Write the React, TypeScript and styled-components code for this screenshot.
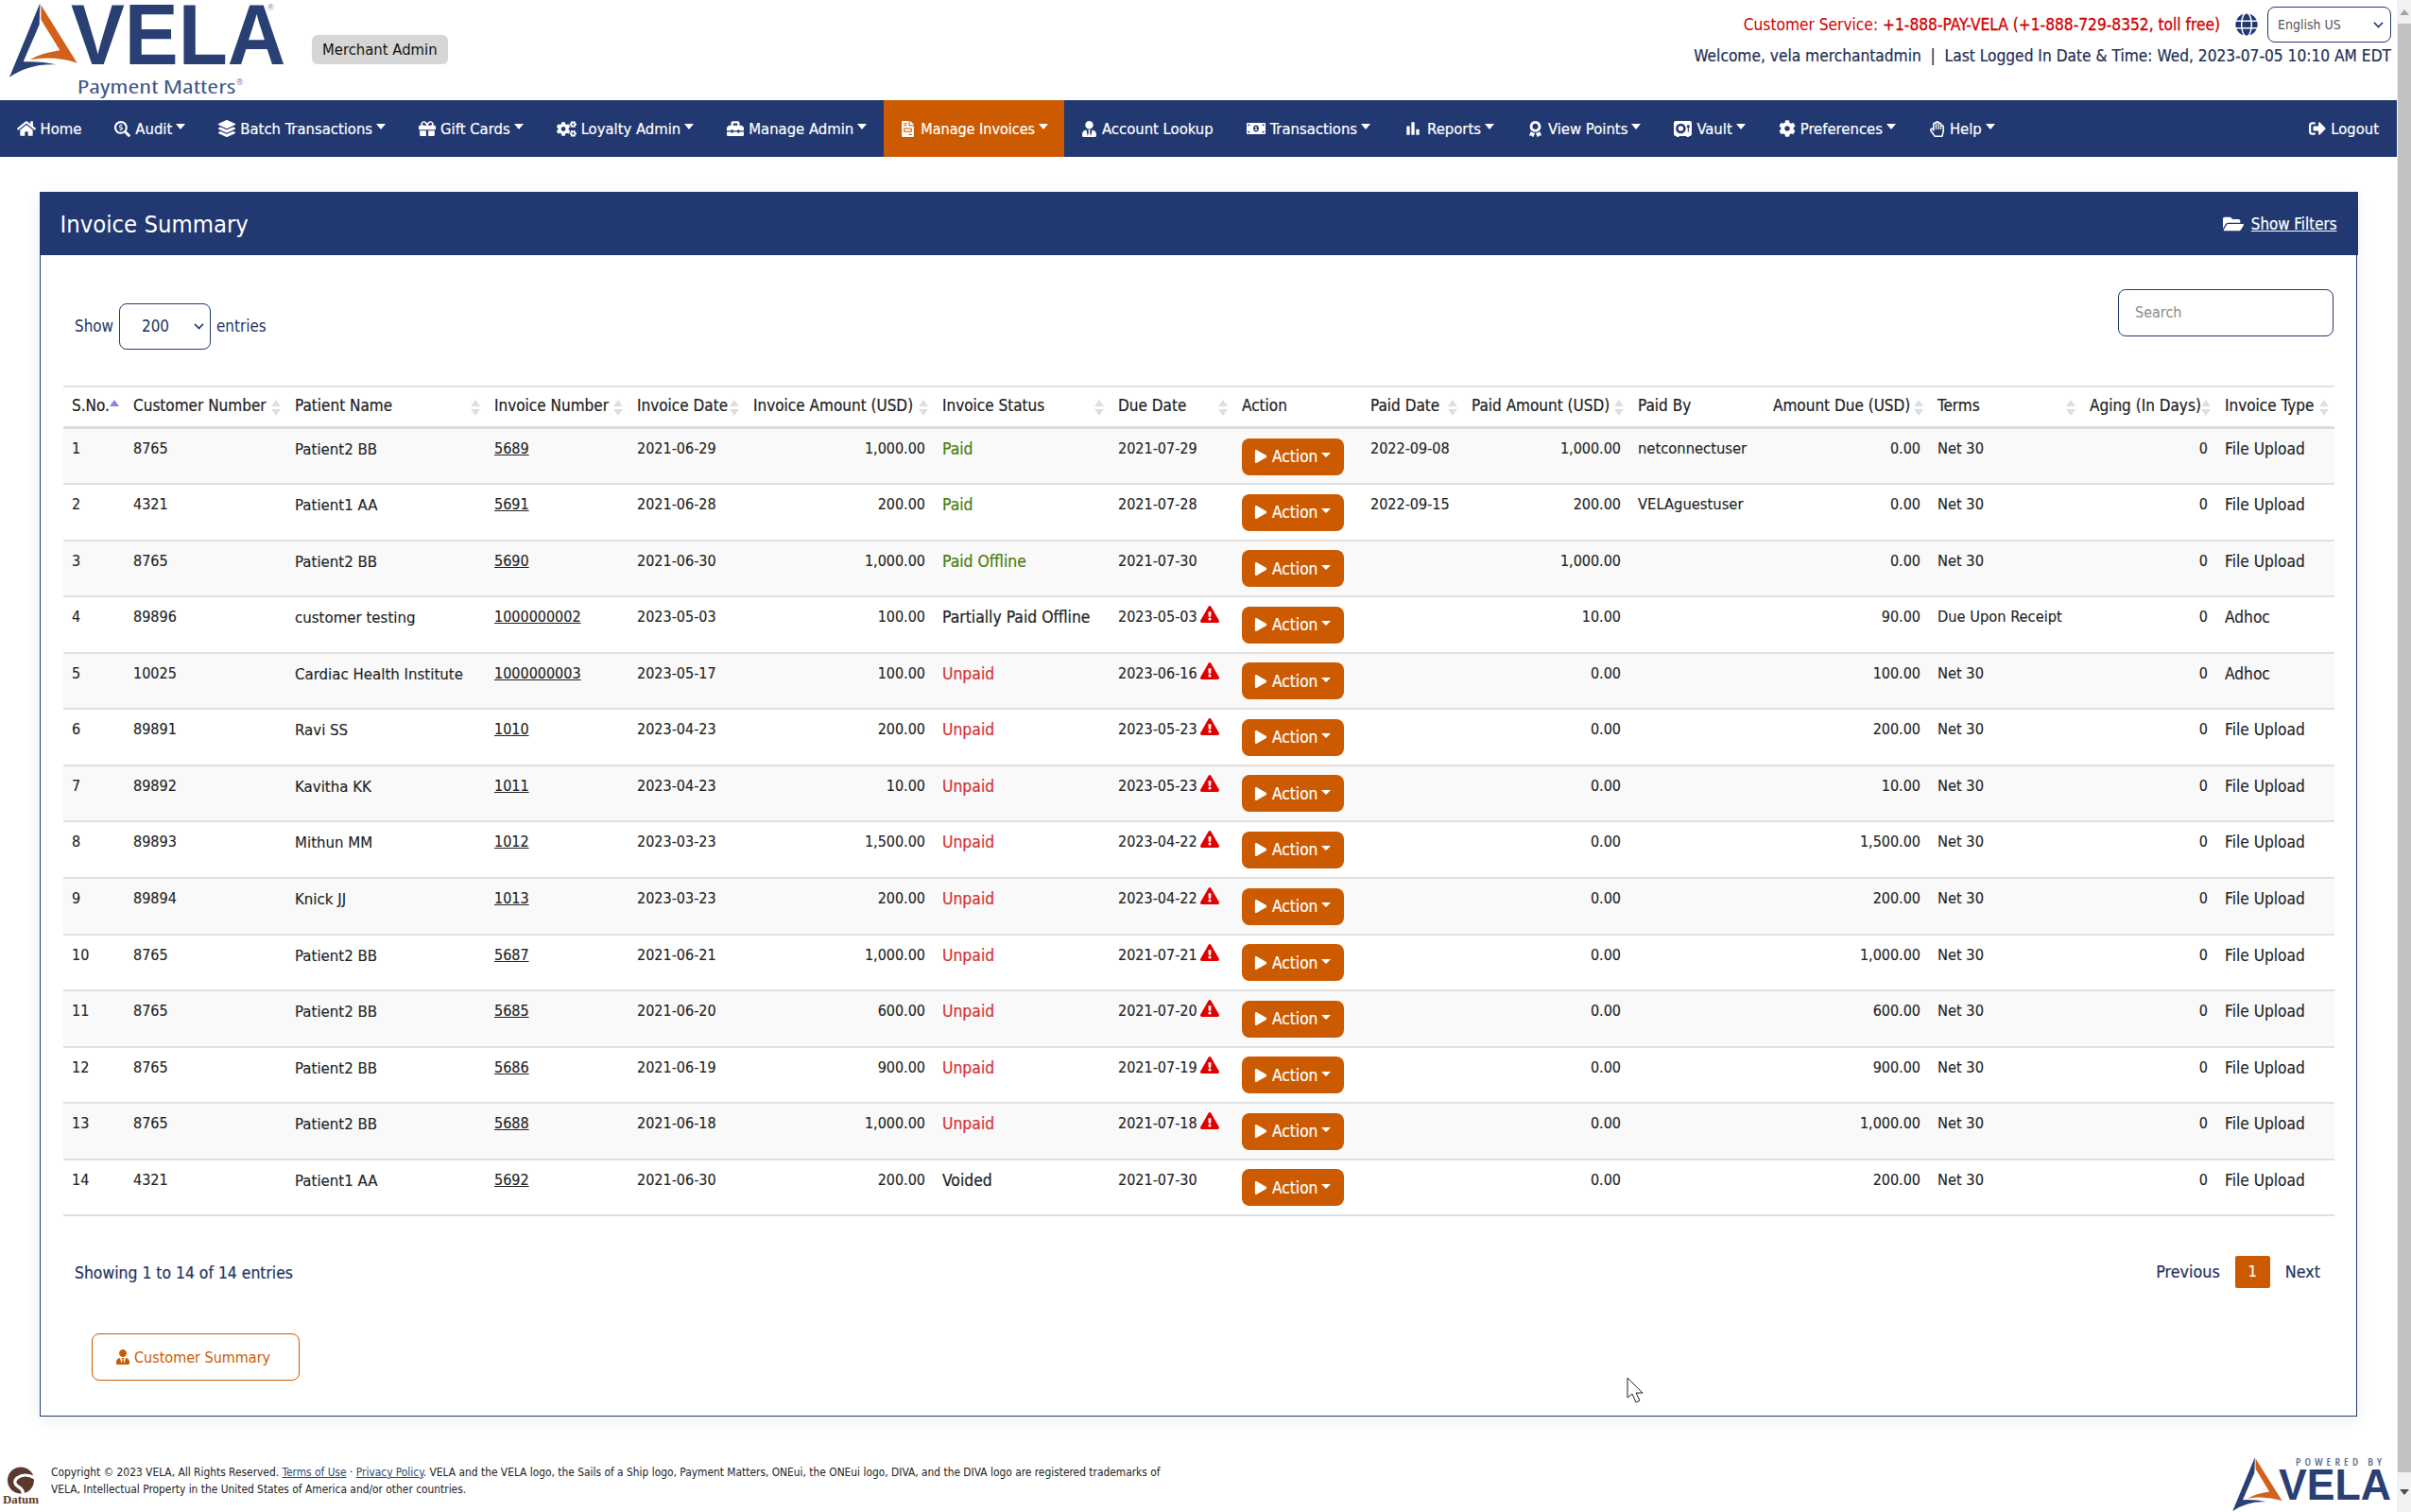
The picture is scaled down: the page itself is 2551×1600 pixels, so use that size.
import React from 'react';
import styled, { createGlobalStyle } from 'styled-components';
import {
	FaAward, FaCog, FaCogs, FaExclamationTriangle, FaFileInvoice, FaFolderOpen, FaGift, FaGlobe, FaHome,
	FaLayerGroup, FaMoneyBillAlt, FaPlay, FaRegHandPaper, FaSearchDollar, FaSignOutAlt, FaToolbox, FaUserTie,
} from 'react-icons/fa';
import { FaVault } from 'react-icons/fa6';
import { MdBarChart } from 'react-icons/md';

const NAVY = '#223871';
const ORANGE = '#cc5a00';
const FONT = '"DejaVu Sans Condensed", "DejaVu Sans", sans-serif';

const GlobalStyle = createGlobalStyle`
	html, body {
		margin: 0;
		padding: 0;
		background: #fff;
		overflow: hidden;
	}
	body {
		font-family: ${FONT};
		font-stretch: condensed;
		font-size: 16px;
		color: #222;
	}
	* {
		box-sizing: border-box;
	}
`;

type NavEntry = { label: string; icon: React.ReactNode; caret?: boolean; active?: boolean; end?: boolean };

const navItems: NavEntry[] = [
	{ label: 'Home', icon: <FaHome size={20} /> },
	{ label: 'Audit', icon: <FaSearchDollar size={17} />, caret: true },
	{ label: 'Batch Transactions', icon: <FaLayerGroup size={18} />, caret: true },
	{ label: 'Gift Cards', icon: <FaGift size={18} />, caret: true },
	{ label: 'Loyalty Admin', icon: <FaCogs size={21} />, caret: true },
	{ label: 'Manage Admin', icon: <FaToolbox size={18} />, caret: true },
	{ label: 'Manage Invoices', icon: <FaFileInvoice size={17} />, caret: true, active: true },
	{ label: 'Account Lookup', icon: <FaUserTie size={17} /> },
	{ label: 'Transactions', icon: <FaMoneyBillAlt size={20} />, caret: true },
	{ label: 'Reports', icon: <MdBarChart size={20} />, caret: true },
	{ label: 'View Points', icon: <FaAward size={17} />, caret: true },
	{ label: 'Vault', icon: <FaVault size={19} />, caret: true },
	{ label: 'Preferences', icon: <FaCog size={18} />, caret: true },
	{ label: 'Help', icon: <FaRegHandPaper size={17} />, caret: true },
];

type Column = { title: string; width: number; sort?: 'none' | 'asc' };

const columns: Column[] = [
	{ title: 'S.No.', width: 65, sort: 'asc' },
	{ title: 'Customer Number', width: 171, sort: 'none' },
	{ title: 'Patient Name', width: 211, sort: 'none' },
	{ title: 'Invoice Number', width: 151, sort: 'none' },
	{ title: 'Invoice Date', width: 123, sort: 'none' },
	{ title: 'Invoice Amount (USD)', width: 200, sort: 'none' },
	{ title: 'Invoice Status', width: 186, sort: 'none' },
	{ title: 'Due Date', width: 131, sort: 'none' },
	{ title: 'Action', width: 136 },
	{ title: 'Paid Date', width: 107, sort: 'none' },
	{ title: 'Paid Amount (USD)', width: 176, sort: 'none' },
	{ title: 'Paid By', width: 143 },
	{ title: 'Amount Due (USD)', width: 174, sort: 'none' },
	{ title: 'Terms', width: 161, sort: 'none' },
	{ title: 'Aging (In Days)', width: 143, sort: 'none' },
	{ title: 'Invoice Type', width: 125, sort: 'none' },
];

type Status = 'Paid' | 'Paid Offline' | 'Partially Paid Offline' | 'Unpaid' | 'Voided';

type Invoice = {
	customer: string;
	patient: string;
	number: string;
	date: string;
	amount: string;
	status: Status;
	due: string;
	late?: boolean;
	paidDate?: string;
	paid: string;
	paidBy?: string;
	balance: string;
	terms: string;
	type: string;
};

const invoices: Invoice[] = [
	{ customer: '8765', patient: 'Patient2 BB', number: '5689', date: '2021-06-29', amount: '1,000.00', status: 'Paid', due: '2021-07-29', paidDate: '2022-09-08', paid: '1,000.00', paidBy: 'netconnectuser', balance: '0.00', terms: 'Net 30', type: 'File Upload' },
	{ customer: '4321', patient: 'Patient1 AA', number: '5691', date: '2021-06-28', amount: '200.00', status: 'Paid', due: '2021-07-28', paidDate: '2022-09-15', paid: '200.00', paidBy: 'VELAguestuser', balance: '0.00', terms: 'Net 30', type: 'File Upload' },
	{ customer: '8765', patient: 'Patient2 BB', number: '5690', date: '2021-06-30', amount: '1,000.00', status: 'Paid Offline', due: '2021-07-30', paid: '1,000.00', balance: '0.00', terms: 'Net 30', type: 'File Upload' },
	{ customer: '89896', patient: 'customer testing', number: '1000000002', date: '2023-05-03', amount: '100.00', status: 'Partially Paid Offline', due: '2023-05-03', late: true, paid: '10.00', balance: '90.00', terms: 'Due Upon Receipt', type: 'Adhoc' },
	{ customer: '10025', patient: 'Cardiac Health Institute', number: '1000000003', date: '2023-05-17', amount: '100.00', status: 'Unpaid', due: '2023-06-16', late: true, paid: '0.00', balance: '100.00', terms: 'Net 30', type: 'Adhoc' },
	{ customer: '89891', patient: 'Ravi SS', number: '1010', date: '2023-04-23', amount: '200.00', status: 'Unpaid', due: '2023-05-23', late: true, paid: '0.00', balance: '200.00', terms: 'Net 30', type: 'File Upload' },
	{ customer: '89892', patient: 'Kavitha KK', number: '1011', date: '2023-04-23', amount: '10.00', status: 'Unpaid', due: '2023-05-23', late: true, paid: '0.00', balance: '10.00', terms: 'Net 30', type: 'File Upload' },
	{ customer: '89893', patient: 'Mithun MM', number: '1012', date: '2023-03-23', amount: '1,500.00', status: 'Unpaid', due: '2023-04-22', late: true, paid: '0.00', balance: '1,500.00', terms: 'Net 30', type: 'File Upload' },
	{ customer: '89894', patient: 'Knick JJ', number: '1013', date: '2023-03-23', amount: '200.00', status: 'Unpaid', due: '2023-04-22', late: true, paid: '0.00', balance: '200.00', terms: 'Net 30', type: 'File Upload' },
	{ customer: '8765', patient: 'Patient2 BB', number: '5687', date: '2021-06-21', amount: '1,000.00', status: 'Unpaid', due: '2021-07-21', late: true, paid: '0.00', balance: '1,000.00', terms: 'Net 30', type: 'File Upload' },
	{ customer: '8765', patient: 'Patient2 BB', number: '5685', date: '2021-06-20', amount: '600.00', status: 'Unpaid', due: '2021-07-20', late: true, paid: '0.00', balance: '600.00', terms: 'Net 30', type: 'File Upload' },
	{ customer: '8765', patient: 'Patient2 BB', number: '5686', date: '2021-06-19', amount: '900.00', status: 'Unpaid', due: '2021-07-19', late: true, paid: '0.00', balance: '900.00', terms: 'Net 30', type: 'File Upload' },
	{ customer: '8765', patient: 'Patient2 BB', number: '5688', date: '2021-06-18', amount: '1,000.00', status: 'Unpaid', due: '2021-07-18', late: true, paid: '0.00', balance: '1,000.00', terms: 'Net 30', type: 'File Upload' },
	{ customer: '4321', patient: 'Patient1 AA', number: '5692', date: '2021-06-30', amount: '200.00', status: 'Voided', due: '2021-07-30', paid: '0.00', balance: '200.00', terms: 'Net 30', type: 'File Upload' },
];

const statusColors: Record<Status, string> = {
	Paid: '#4c7c0c',
	'Paid Offline': '#4c7c0c',
	'Partially Paid Offline': '#222',
	Unpaid: '#d43333',
	Voided: '#222',
};

const Sail = () => (
	<>
		<path d="M127 10 L30 245 Q95 200 178 205 Q130 194 74 196 L125 78 Z" fill="#2a3f73" />
		<path d="M130 16 L245 200 Q170 176 95 190 Q130 168 190 160 L130 62 Z" fill="#d2611c" />
	</>
);

const MainLogo = () => (
	<svg width={320} height={106} viewBox="0 0 960 318" role="img" aria-label="VELA Payment Matters">
		<Sail />
		<text x={225} y={205} fontFamily="'Liberation Sans', sans-serif" fontWeight={700} fontSize={270} textLength={682} lengthAdjust="spacingAndGlyphs" fill="#2a3f73">
			VELA
		</text>
		<text x={850} y={34} fontFamily="'Liberation Sans', sans-serif" fontSize={26} fill="#7b8aa8">
			®
		</text>
		<text x={245} y={296} fontFamily="'Open Sans', sans-serif" fontSize={60} textLength={503} lengthAdjust="spacingAndGlyphs" fill="#3f5786">
			Payment Matters
		</text>
		<text x={750} y={270} fontFamily="'Open Sans', sans-serif" fontSize={26} fill="#6c7da0">
			®
		</text>
	</svg>
);

const PoweredLogo = () => (
	<svg width={170} height={58} viewBox="0 0 170 58" role="img" aria-label="Powered by VELA">
		<g transform="translate(-7,-1.5) scale(0.243)">
			<Sail />
		</g>
		<text x={67} y={10} fontFamily="'Open Sans', sans-serif" fontWeight={600} fontSize={11.5} textLength={91} fill="#5d6d8e">
			POWERED BY
		</text>
		<text x={49} y={46} fontFamily="'Liberation Sans', sans-serif" fontWeight={700} fontSize={46} textLength={119} lengthAdjust="spacingAndGlyphs" fill="#2a3f73">
			VELA
		</text>
	</svg>
);

const DatumLogo = () => (
	<svg width={40} height={40} viewBox="0 0 40 40" role="img" aria-label="Datum">
		<circle cx={20} cy={14.5} r={14} fill="#5b3a2c" />
		<path d="M35 12 Q24 6 16 12 Q11 17 17 21 Q24 25 22 31" stroke="#fff" strokeWidth={3.2} fill="none" />
		<text x={20} y={38.5} textAnchor="middle" fontFamily="'Liberation Serif', serif" fontWeight={700} fontSize={12} textLength={38} lengthAdjust="spacingAndGlyphs" fill="#5b3a2c">
			Datum
		</text>
	</svg>
);

const App = () => {
	return (
		<Shell>
			<GlobalStyle />
			<Main>
				<Header>
					<Brand>
						<MainLogo />
						<RoleBadge>Merchant Admin</RoleBadge>
					</Brand>
					<HeaderInfo>
						<ServiceRow>
							<ServiceText>
								Customer Service: <strong>+1-888-PAY-VELA (+1-888-729-8352, toll free)</strong>
							</ServiceText>
							<FaGlobe size={24} color={NAVY} />
							<LanguageSelect>
								<span>English US</span>
								<Chevron />
							</LanguageSelect>
						</ServiceRow>
						<WelcomeText>Welcome, vela merchantadmin &nbsp;|&nbsp; Last Logged In Date &amp; Time: Wed, 2023-07-05 10:10 AM EDT</WelcomeText>
					</HeaderInfo>
				</Header>

				<Nav>
					{navItems.map((item) => (
						<NavItem key={item.label} $active={item.active} $caret={item.caret}>
							{item.icon}
							{item.label}
						</NavItem>
					))}
					<NavItem $end>
						<FaSignOutAlt size={18} />
						Logout
					</NavItem>
				</Nav>

				<Content>
					<Panel>
						<PanelHeading>
							<PanelTitle>Invoice Summary</PanelTitle>
							<FilterLink>
								<FaFolderOpen size={22} />
								<u>Show Filters</u>
							</FilterLink>
						</PanelHeading>
						<PanelBody>
							<ToolRow>
								<EntriesLabel>
									Show
									<EntriesSelect>
										<span>200</span>
										<Chevron />
									</EntriesSelect>
									entries
								</EntriesLabel>
								<SearchInput placeholder="Search" />
							</ToolRow>

							<Table>
								<colgroup>
									{columns.map((col) => (
										<col key={col.title} width={col.width} />
									))}
								</colgroup>
								<thead>
									<tr>
										{columns.map((col) => (
											<Th key={col.title}>
												{col.title}
												{col.sort && <SortArrows $asc={col.sort === 'asc'} />}
											</Th>
										))}
									</tr>
								</thead>
								<tbody>
									{invoices.map((row, i) => (
										<Row key={row.number} $odd={i % 2 === 0}>
											<Td>{i + 1}</Td>
											<Td>{row.customer}</Td>
											<Td $size={16.7}>{row.patient}</Td>
											<Td>
												<InvoiceLink>{row.number}</InvoiceLink>
											</Td>
											<Td>{row.date}</Td>
											<NumTd>{row.amount}</NumTd>
											<Td $size={17.4}>
												<StatusText $color={statusColors[row.status]}>{row.status}</StatusText>
											</Td>
											<Td>
												<DueDate>
													{row.due}
													{row.late && <FaExclamationTriangle size={20} color="#e00000" />}
												</DueDate>
											</Td>
											<ActionTd>
												<ActionButton>
													<FaPlay size={14} />
													Action
												</ActionButton>
											</ActionTd>
											<Td>{row.paidDate}</Td>
											<NumTd>{row.paid}</NumTd>
											<Td $size={16.4}>{row.paidBy}</Td>
											<NumTd>{row.balance}</NumTd>
											<Td $size={16.3}>{row.terms}</Td>
											<NumTd>0</NumTd>
											<Td $size={17.2}>{row.type}</Td>
										</Row>
									))}
								</tbody>
							</Table>

							<TableFooter>
								<ShowingText>Showing 1 to 14 of 14 entries</ShowingText>
								<Pager>
									<PagerLink>Previous</PagerLink>
									<PageNumber>1</PageNumber>
									<PagerLink>Next</PagerLink>
								</Pager>
							</TableFooter>

							<SummaryButton>
								<FaUserTie size={16} />
								Customer Summary
							</SummaryButton>
						</PanelBody>
					</Panel>
				</Content>

				<Footer>
					<FooterLeft>
						<DatumLogo />
						<Legal>
							Copyright © 2023 VELA, All Rights Reserved. <LegalLink>Terms of Use</LegalLink> · <LegalLink>Privacy Policy</LegalLink>. VELA and the VELA logo, the Sails of a Ship logo,
							Payment Matters, ONEui, the ONEui logo, DIVA, and the DIVA logo are registered trademarks of
							<br />
							VELA, Intellectual Property in the United States of America and/or other countries.
						</Legal>
					</FooterLeft>
					<PoweredLogo />
				</Footer>
			</Main>

			<Scrollbar>
				<ScrollArrow $dir="up" />
				<ScrollThumb />
				<ScrollArrow $dir="down" />
			</Scrollbar>

			<Cursor width={18} height={28} viewBox="0 0 18 28">
				<path d="M1 1 L1 22 L6 18 L10 27 L14 25 L10 17 L17 17 Z" fill="#fff" stroke="#222" strokeWidth={1} />
			</Cursor>
		</Shell>
	);
};

export default App;

const Shell = styled.div`
	position: relative;
	display: flex;
	width: 2551px;
	height: 1600px;
	overflow: hidden;
`;

const Main = styled.div`
	display: flex;
	flex-direction: column;
	flex: 1;
	min-width: 0;
`;

const Header = styled.header`
	display: flex;
	justify-content: space-between;
	height: 106px;
	padding-right: 6px;
`;

const Brand = styled.div`
	display: flex;
	align-items: flex-start;
	gap: 10px;
`;

const RoleBadge = styled.span`
	margin-top: 37px;
	height: 31px;
	padding: 0 11px;
	line-height: 31px;
	background: #d6d6d6;
	border-radius: 6px;
	color: #111;
	font-size: 16.5px;
`;

const HeaderInfo = styled.div`
	display: flex;
	flex-direction: column;
	align-items: flex-end;
	padding-top: 7px;
`;

const ServiceRow = styled.div`
	display: flex;
	align-items: center;
	gap: 10px;
	height: 38px;
`;

const ServiceText = styled.span`
	color: #d00000;
	font-size: 17.2px;
	margin-right: 6px;
	strong {
		font-weight: 500;
		-webkit-text-stroke: 0.3px #d00000;
	}
`;

const selectBox = `
	display: flex;
	align-items: center;
	justify-content: space-between;
	background: #fff;
	border: 1.5px solid ${NAVY};
	border-radius: 8px;
`;

const LanguageSelect = styled.div`
	${selectBox}
	width: 131px;
	height: 38px;
	padding: 0 6px 0 10px;
	color: #555;
	font-size: 14px;
`;

const Chevron = styled.i`
	width: 9px;
	height: 9px;
	margin: -4px 2px 0 0;
	border-right: 2px solid ${NAVY};
	border-bottom: 2px solid ${NAVY};
	transform: rotate(45deg) scale(0.8);
`;

const WelcomeText = styled.div`
	margin-top: 2px;
	line-height: 24px;
	color: #1f2f55;
	font-size: 17.2px;
	-webkit-text-stroke: 0.2px #1f2f55;
`;

const Nav = styled.nav`
	display: flex;
	align-items: stretch;
	height: 60px;
	background: ${NAVY};
`;

const NavItem = styled.a<{ $active?: boolean; $caret?: boolean; $end?: boolean }>`
	display: flex;
	align-items: center;
	gap: 5px;
	padding: 0 17.5px;
	background: ${({ $active }) => ($active ? ORANGE : 'transparent')};
	color: #fff;
	font-size: ${({ $active }) => ($active ? '16px' : '16.5px')};
	white-space: nowrap;
	-webkit-text-stroke: 0.2px #fff;
	${({ $end }) => $end && 'margin-left: auto; padding-right: 19px;'}
	${({ $caret }) =>
		$caret &&
		`&::after {
			content: '';
			margin: -4px 0 0 -1px;
			border-top: 6px solid #fff;
			border-left: 5px solid transparent;
			border-right: 5px solid transparent;
		}`}
`;

const Content = styled.main`
	padding: 37px 42px 0;
`;

const Panel = styled.section`
	border: 1.5px solid ${NAVY};
	box-shadow: 0 4px 16px rgba(0, 0, 0, 0.07);
`;

const PanelHeading = styled.div`
	display: flex;
	align-items: center;
	justify-content: space-between;
	height: 67px;
	margin: -1.5px -1.5px 0;
	padding: 1px 22px 0;
	background: ${NAVY};
	color: #fff;
`;

const PanelTitle = styled.h1`
	margin: 0;
	font-size: 25.4px;
	font-weight: 400;
`;

const FilterLink = styled.a`
	display: flex;
	align-items: center;
	gap: 8px;
	font-size: 16.8px;
	-webkit-text-stroke: 0.2px #fff;
`;

const PanelBody = styled.div`
	padding: 36px 24px 37px;
`;

const ToolRow = styled.div`
	display: flex;
	align-items: flex-start;
	justify-content: space-between;
	height: 102px;
`;

const EntriesLabel = styled.div`
	display: flex;
	align-items: center;
	gap: 6px;
	margin: 15px 0 0 12px;
	color: #24345f;
	font-size: 16.9px;
`;

const EntriesSelect = styled.div`
	${selectBox}
	width: 97px;
	height: 49px;
	padding: 0 5px 0 23px;
	color: #24345f;
`;

const SearchInput = styled.input`
	width: 228px;
	height: 50px;
	padding: 0 17px;
	border: 1.5px solid ${NAVY};
	border-radius: 8px;
	font-family: ${FONT};
	font-stretch: condensed;
	font-size: 16px;
	&::placeholder {
		color: #8a8a8a;
	}
`;

const Table = styled.table`
	width: 2402px;
	table-layout: fixed;
	border-collapse: collapse;
	border-top: 2px solid #e2e2e2;
`;

const Th = styled.th`
	position: relative;
	height: 44px;
	padding: 0 0 2px 9px;
	border-bottom: 3px solid #dcdcdc;
	text-align: left;
	font-size: 17px;
	font-weight: 500;
	white-space: nowrap;
	-webkit-text-stroke: 0.2px #222;
`;

const SortArrows = styled.span<{ $asc: boolean }>`
	position: absolute;
	right: 6px;
	top: 13px;
	width: 10px;
	height: 17px;
	&::before,
	&::after {
		content: '';
		position: absolute;
		left: 0;
		border-left: 5px solid transparent;
		border-right: 5px solid transparent;
	}
	&::before {
		top: 0;
		border-bottom: 7.5px solid ${({ $asc }) => ($asc ? '#8589dc' : '#dedede')};
	}
	&::after {
		bottom: 0;
		border-top: 7.5px solid #dedede;
		${({ $asc }) => $asc && 'display: none;'}
	}
`;

const Row = styled.tr<{ $odd: boolean }>`
	height: 59.57px;
	background: ${({ $odd }) => ($odd ? '#f9f9f9' : '#fff')};
	border-bottom: 2px solid #e0e0e0;
`;

const Td = styled.td<{ $size?: number }>`
	padding: 9px 9px 0;
	vertical-align: top;
	line-height: 24px;
	font-size: ${({ $size }) => $size ?? 16}px;
	white-space: nowrap;
	overflow: visible;
	-webkit-text-stroke: 0.12px #222;
`;

const NumTd = styled(Td)`
	text-align: right;
`;

const ActionTd = styled(Td)`
	padding-top: 9.5px;
`;

const InvoiceLink = styled.a`
	color: #222;
	text-decoration: underline;
`;

const StatusText = styled.span<{ $color: string }>`
	color: ${({ $color }) => $color};
	-webkit-text-stroke: 0.2px ${({ $color }) => $color};
`;

const DueDate = styled.span`
	display: inline-flex;
	align-items: flex-start;
	gap: 3px;
	svg {
		margin-top: -1px;
	}
`;

const ActionButton = styled.button`
	display: flex;
	align-items: center;
	gap: 5px;
	width: 108px;
	height: 39px;
	padding: 0 0 0 13px;
	border: 0;
	border-radius: 8px;
	background: ${ORANGE};
	color: #fff;
	font-family: ${FONT};
	font-stretch: condensed;
	font-size: 17.2px;
	-webkit-text-stroke: 0.2px #fff;
	&::after {
		content: '';
		margin: -3px 0 0 -1px;
		border-top: 5px solid #fff;
		border-left: 5px solid transparent;
		border-right: 5px solid transparent;
	}
`;

const TableFooter = styled.div`
	display: flex;
	align-items: flex-start;
	justify-content: space-between;
	padding: 42px 14px 0 12px;
`;

const ShowingText = styled.div`
	margin-top: 6px;
	line-height: 24px;
	color: #24345f;
	font-size: 17.4px;
	-webkit-text-stroke: 0.2px #24345f;
`;

const Pager = styled.div`
	display: flex;
	align-items: center;
	gap: 16px;
	color: #24345f;
	-webkit-text-stroke: 0.2px #24345f;
`;

const PagerLink = styled.a`
	font-size: 17.8px;
	margin-top: -2px;
`;

const PageNumber = styled.span`
	width: 37px;
	height: 34px;
	line-height: 34px;
	text-align: center;
	background: ${ORANGE};
	border-radius: 2px;
	color: #fff;
	-webkit-text-stroke: 0.2px #fff;
`;

const SummaryButton = styled.button`
	display: flex;
	align-items: center;
	gap: 4px;
	width: 220px;
	height: 50px;
	margin: 48px 0 0 30px;
	padding: 0 0 0 24px;
	background: #fff;
	border: 1.5px solid ${ORANGE};
	border-radius: 8px;
	color: ${ORANGE};
	font-family: ${FONT};
	font-stretch: condensed;
	font-size: 16px;
`;

const Footer = styled.footer`
	display: flex;
	align-items: flex-start;
	justify-content: space-between;
	margin-top: 42px;
	padding: 0 4px 0 2px;
`;

const FooterLeft = styled.div`
	display: flex;
	align-items: flex-start;
	gap: 12px;
	padding-top: 11px;
`;

const Legal = styled.p`
	margin: -3.5px 0 0;
	color: #222;
	font-size: 11.87px;
	line-height: 18px;
	white-space: nowrap;
`;

const LegalLink = styled.a`
	color: #2b4a78;
	text-decoration: underline;
`;

const Scrollbar = styled.aside`
	display: flex;
	flex-direction: column;
	width: 15px;
	background: #f1f1f1;
`;

const ScrollArrow = styled.div<{ $dir: 'up' | 'down' }>`
	display: flex;
	align-items: center;
	justify-content: center;
	height: ${({ $dir }) => ($dir === 'up' ? '25px' : '42px')};
	&::before {
		content: '';
		border-left: 5px solid transparent;
		border-right: 5px solid transparent;
		${({ $dir }) => ($dir === 'up' ? 'border-bottom: 6px solid #a3a3a3;' : 'border-top: 6px solid #505050;')}
	}
`;

const ScrollThumb = styled.div`
	flex: 1;
	margin-left: 1px;
	background: #c1c1c1;
`;

const Cursor = styled.svg`
	position: absolute;
	left: 1721px;
	top: 1457px;
`;
